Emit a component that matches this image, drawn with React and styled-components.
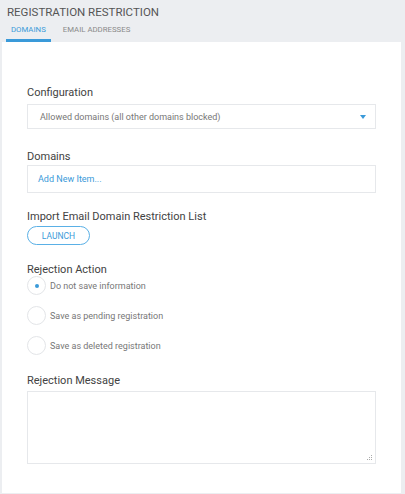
import React from "react";
import styled, { createGlobalStyle } from "styled-components";

const GlobalStyle = createGlobalStyle`
  html, body {
    margin: 0;
    padding: 0;
    background: #eceef1;
    font-family: Roboto, "Liberation Sans", sans-serif;
  }
`;

const Page = styled.div`
  width: 405px;
  height: 494px;
  display: flex;
  flex-direction: column;
  box-sizing: border-box;
  padding: 0 4px 0 2px;
`;

const Title = styled.h1`
  margin: 0;
  padding: 5px 0 0 5px;
  font-size: 11.5px;
  font-weight: 400;
  color: #555;
  line-height: 14px;
`;

const Tabs = styled.div`
  display: flex;
  gap: 7px;
  padding: 6px 0 0 4px;
`;

const Tab = styled.div`
  font-size: 7.8px;
  text-transform: uppercase;
  color: ${p => (p.$active ? "#3a9ad9" : "#8a8a8a")};
  padding: 0 5px 4px 5px;
  border-bottom: 3px solid ${p => (p.$active ? "#3a9ad9" : "transparent")};
  line-height: 10px;
`;

const Card = styled.div`
  background: #fff;
  height: 451px;
  padding: 44px 25px 0 25px;
  box-sizing: border-box;
  display: flex;
  flex-direction: column;
`;

const Field = styled.div`
  display: flex;
  flex-direction: column;
  margin-bottom: ${p => p.$gap || 0}px;
`;

const Label = styled.div`
  font-size: 11px;
  color: #424242;
  line-height: 13px;
  margin-bottom: ${p => p.$gap ?? 5}px;
`;

const Box = styled.div`
  border: 1px solid #e6e8eb;
  height: ${p => p.$h || 24}px;
  display: flex;
  align-items: center;
  justify-content: space-between;
  padding: 0 ${p => p.$pad || 12}px;
  font-size: 9px;
  color: ${p => p.$color || "#777"};
  position: relative;
`;

const Caret = styled.span`
  width: 0;
  height: 0;
  border-left: 3px solid transparent;
  border-right: 3px solid transparent;
  border-top: 4px solid #3a9ad9;
  margin-right: -3px;
`;

const LaunchButton = styled.button`
  align-self: flex-start;
  width: 63px;
  height: 19px;
  border: 1px solid #5ab0e6;
  border-radius: 10px;
  background: #fff;
  color: #3a9ad9;
  font-family: inherit;
  font-size: 8.5px;
  padding: 0;
`;

const RadioRow = styled.div`
  display: flex;
  align-items: center;
  gap: 4px;
  height: 19px;
  margin-bottom: 11px;
`;

const RadioCircle = styled.span`
  width: 17px;
  height: 17px;
  border-radius: 50%;
  border: 1px solid #e3e5e8;
  display: flex;
  align-items: center;
  justify-content: center;
  &::after {
    content: "";
    width: 4px;
    height: 4px;
    border-radius: 50%;
    background: ${p => (p.$checked ? "#3a9ad9" : "transparent")};
  }
`;

const RadioText = styled.span`
  font-size: 9px;
  color: #777;
`;

const Grip = styled.svg`
  position: absolute;
  right: 2px;
  bottom: 2px;
`;

const options = [
  "Do not save information",
  "Save as pending registration",
  "Save as deleted registration",
];

export default function App() {
  return (
    <>
      <GlobalStyle />
      <Page>
        <Title>REGISTRATION RESTRICTION</Title>
        <Tabs>
          <Tab $active>Domains</Tab>
          <Tab>Email Addresses</Tab>
        </Tabs>
        <Card>
          <Field $gap={21}>
            <Label $gap={5}>Configuration</Label>
            <Box $h={23}>
              <span>Allowed domains (all other domains blocked)</span>
              <Caret />
            </Box>
          </Field>
          <Field $gap={17}>
            <Label $gap={2}>Domains</Label>
            <Box $h={26} $pad={10} $color="#3a9ad9">Add New Item...</Box>
          </Field>
          <Field $gap={18}>
            <Label $gap={3}>Import Email Domain Restriction List</Label>
            <LaunchButton>LAUNCH</LaunchButton>
          </Field>
          <Field $gap={8}>
            <Label $gap={0}>Rejection Action</Label>
            {options.map((o, i) => (
              <RadioRow key={o}>
                <RadioCircle $checked={i === 0} />
                <RadioText>{o}</RadioText>
              </RadioRow>
            ))}
          </Field>
          <Field>
            <Label $gap={4}>Rejection Message</Label>
            <Box $h={71}>
              <Grip width="7" height="7" viewBox="0 0 7 7">
                <rect x="5" y="1" width="1" height="1" fill="#aaa" />
                <rect x="3" y="3" width="1" height="1" fill="#aaa" />
                <rect x="5" y="3" width="1" height="1" fill="#aaa" />
                <rect x="1" y="5" width="1" height="1" fill="#aaa" />
                <rect x="3" y="5" width="1" height="1" fill="#aaa" />
                <rect x="5" y="5" width="1" height="1" fill="#aaa" />
              </Grip>
            </Box>
          </Field>
        </Card>
      </Page>
    </>
  );
}
